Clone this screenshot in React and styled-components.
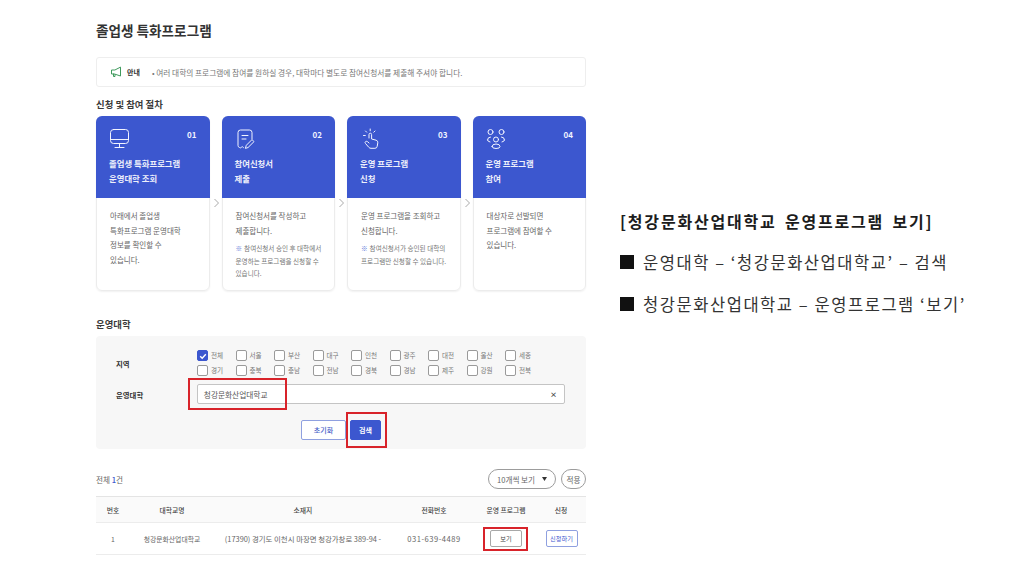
import React from "react";
import styled, { createGlobalStyle } from "styled-components";

const GlobalStyle = createGlobalStyle`
  html, body {
    margin: 0;
    padding: 0;
    background: #ffffff;
  }
  body {
    font-family: "Noto Sans CJK KR", "Noto Sans", sans-serif;
  }
`;

const Page = styled.div`
  width: 1024px;
  height: 576px;
  display: flex;
  overflow: hidden;
  background: #fff;
`;

const LeftColumn = styled.div`
  width: 490px;
  margin-left: 96px;
  padding-top: 21px;
  display: flex;
  flex-direction: column;
`;

const RightColumn = styled.div`
  margin-left: 34px;
  padding-top: 210px;
  display: flex;
  flex-direction: column;
  color: #222;
`;

const GuideTitle = styled.div`
  font-size: 16px;
  line-height: 22px;
  font-weight: 700;
  color: #1c1c1c;
  white-space: nowrap;
  word-spacing: 3px;
  letter-spacing: 1.8px;
`;

const GuideLine = styled.div`
  margin-top: ${(p) => p.$gap}px;
  font-size: 16.5px;
  line-height: 22px;
  color: #333;
  white-space: pre;
  letter-spacing: 1.55px;
  display: flex;
  align-items: center;
`;

const Square = styled.span`
  width: 14px;
  height: 14px;
  background: #111;
  margin-right: 9px;
`;

const PageTitle = styled.h1`
  margin: 0;
  font-size: 13.6px;
  line-height: 18px;
  font-weight: 700;
  color: #333;
`;

const Notice = styled.div`
  margin-top: 18px;
  height: 30px;
  box-sizing: border-box;
  border: 1px solid #eeeeee;
  border-radius: 3px;
  display: flex;
  align-items: center;
  padding-left: 13px;
  font-size: 7.7px;
  color: #777;
  white-space: nowrap;
`;

const NoticeLabel = styled.span`
  font-size: 7px;
  font-weight: 700;
  color: #333;
  margin-left: 5px;
  margin-right: 12px;
`;

const SectionTitle = styled.h2`
  margin: ${(p) => p.$top}px 0 0;
  font-size: 9.4px;
  line-height: 14px;
  font-weight: 700;
  color: #3a3a3a;
`;

const Steps = styled.div`
  margin-top: 5px;
  display: grid;
  grid-template-columns: repeat(4, 113.5px);
  column-gap: 12px;
`;

const Card = styled.div`
  position: relative;
  height: 175px;
  box-sizing: border-box;
  border: 1px solid #ececec;
  border-radius: 6px;
  box-shadow: 0 1px 2px rgba(0, 0, 0, 0.06);
  display: flex;
  flex-direction: column;
`;

const CardHead = styled.div`
  height: 82px;
  margin: -1px -1px 0;
  background: #3c57cf;
  border-radius: 6px 6px 0 0;
  box-sizing: border-box;
  padding: 12px 13px 0 13px;
  color: #fff;
  display: flex;
  flex-direction: column;
`;

const CardTop = styled.div`
  display: flex;
  justify-content: space-between;
  align-items: flex-start;
  height: 24px;
`;

const StepNo = styled.span`
  font-size: 8px;
  line-height: 14px;
  font-weight: 700;
  color: #f1f3ff;
`;

const CardTitle = styled.div`
  margin-top: 4px;
  font-size: 8.4px;
  line-height: 15px;
  font-weight: 700;
  color: #eef0fb;
  white-space: pre-line;
`;

const CardBody = styled.div`
  padding: 11px 6px 0 13px;
  font-size: 7.5px;
  line-height: 14.5px;
  color: #666;
  white-space: pre-line;
`;

const CardNote = styled.div`
  margin-top: 4px;
  font-size: 6.6px;
  line-height: 12.5px;
  color: #777;
  white-space: pre-line;

  b {
    color: #5b77d8;
    font-weight: 400;
    margin-right: 2px;
  }
`;

const Chevron = styled.svg`
  position: absolute;
  top: 81px;
  right: -11px;
  width: 7px;
  height: 10px;
`;

const FilterPanel = styled.div`
  position: relative;
  margin-top: 5px;
  height: 113px;
  box-sizing: border-box;
  background: #f7f7f7;
  border-radius: 4px;
  padding: 12px 21px 0 20px;
  display: flex;
  flex-direction: column;
`;

const FilterRow = styled.div`
  display: flex;
  align-items: center;
  height: ${(p) => p.$height}px;
  margin-top: ${(p) => p.$top || 0}px;
`;

const FilterLabel = styled.div`
  width: 81px;
  font-size: 7.4px;
  font-weight: 700;
  color: #333;
`;

const RegionGrid = styled.div`
  display: grid;
  grid-template-columns: repeat(9, 38.5px);
  row-gap: 4px;
`;

const Region = styled.div`
  display: flex;
  align-items: center;
  gap: 3px;
  font-size: 6.6px;
  line-height: 11px;
  color: #777;
`;

const Box = styled.span`
  width: 11px;
  height: 11px;
  box-sizing: border-box;
  border-radius: 2px;
  background: ${(p) => (p.$on ? "#3c57cf" : "#fff")};
  border: 1px solid ${(p) => (p.$on ? "#3c57cf" : "#9a9a9a")};
  display: flex;
  align-items: center;
  justify-content: center;
`;

const SearchInput = styled.div`
  width: 369px;
  height: 20px;
  box-sizing: border-box;
  background: #fff;
  border: 1px solid #c4c4c4;
  border-radius: 2px;
  padding: 0 7px 0 6px;
  display: flex;
  align-items: center;
  justify-content: space-between;
  font-size: 7.7px;
  color: #555;
`;

const ClearMark = styled.span`
  font-size: 7px;
  font-weight: 700;
  color: #444;
`;

const ButtonRow = styled.div`
  margin-top: 16px;
  display: flex;
  justify-content: center;
  gap: 4px;
  padding-left: 1px;
`;

const ActionButton = styled.button`
  height: 20px;
  width: ${(p) => p.$width}px;
  padding: 0;
  box-sizing: border-box;
  border-radius: 2px;
  border: 1px solid ${(p) => (p.$primary ? "#3c57cf" : "#8fa0e0")};
  background: ${(p) => (p.$primary ? "#3c57cf" : "#fff")};
  color: ${(p) => (p.$primary ? "#fff" : "#4a63c8")};
  font-family: inherit;
  font-size: 7px;
  font-weight: ${(p) => (p.$primary ? 700 : 500)};
`;

const Highlight = styled.div`
  position: absolute;
  left: ${(p) => p.$x}px;
  top: ${(p) => p.$y}px;
  width: ${(p) => p.$w}px;
  height: ${(p) => p.$h}px;
  box-sizing: border-box;
  border: 2px solid #d8232a;
  pointer-events: none;
`;

const ListBar = styled.div`
  margin-top: 20px;
  height: 20px;
  display: flex;
  align-items: center;
  justify-content: space-between;
`;

const Count = styled.div`
  font-size: 7.6px;
  color: #666;

  b {
    color: #3c57cf;
    font-weight: 500;
  }
`;

const ListTools = styled.div`
  display: flex;
  gap: 5px;
`;

const Pill = styled.div`
  height: 20px;
  width: ${(p) => p.$width}px;
  box-sizing: border-box;
  border: 1px solid #9c9c9c;
  border-radius: 10px;
  display: flex;
  align-items: center;
  justify-content: ${(p) => (p.$caret ? "space-between" : "center")};
  padding: ${(p) => (p.$caret ? "0 8px 0 8px" : "0")};
  font-size: 7.6px;
  color: #666;
  white-space: nowrap;
`;

const Table = styled.div`
  margin-top: 7px;
  border-top: 1px solid #e4e4e4;
`;

const TableRow = styled.div`
  display: grid;
  grid-template-columns: 34px 84px 178px 84px 60px 50px;
  height: ${(p) => p.$height}px;
  background: ${(p) => (p.$head ? "#fafafa" : "#fff")};
  border-bottom: 1px solid #ececec;
  align-items: center;
  text-align: center;
  font-size: 6.8px;
  color: ${(p) => (p.$head ? "#444" : "#666")};
  font-weight: ${(p) => (p.$head ? 500 : 400)};
  white-space: nowrap;
`;

const AddressText = styled.span`
  font-size: 7.4px;
`;

const PhoneText = styled.span`
  font-size: 7.6px;
  letter-spacing: 0.5px;
`;

const SmallButton = styled.button`
  height: 17px;
  width: ${(p) => p.$width}px;
  padding: 0;
  margin-left: ${(p) => (p.$blue ? 1 : 0)}px;
  border-radius: 2px;
  border: 1px solid ${(p) => (p.$blue ? "#8fa0e0" : "#a8a8a8")};
  background: #fff;
  color: ${(p) => (p.$blue ? "#3c57cf" : "#444")};
  font-family: inherit;
  font-size: 6.2px;
  white-space: nowrap;
`;

const Cell = styled.div`
  position: relative;
  display: flex;
  justify-content: center;
  align-items: center;
`;

const IconSvg = styled.svg`
  width: ${(p) => p.$size || 22}px;
  height: ${(p) => p.$size || 22}px;
  fill: none;
  stroke: ${(p) => p.$color || "#f2f4ff"};
  stroke-width: ${(p) => p.$stroke || 1};
  stroke-linecap: round;
  stroke-linejoin: round;
`;

const MonitorIcon = () => (
  <IconSvg viewBox="0 0 22 22">
    <rect x="1.5" y="1.5" width="18" height="14" rx="3" />
    <path d="M1.5 11.5h18M10.5 15.5v4M6 19.5h9" />
  </IconSvg>
);

const FormIcon = () => (
  <IconSvg viewBox="0 0 22 22">
    <path d="M8.5 19.5q-1.2-1.6-2.2-.2-.8 1-1.8.2Q3 19 3 17.5V4.5Q3 2 5.5 2h9Q17 2 17 4.5V11" />
    <path d="M7 7.5h6M7 11h4" />
    <path d="M10.5 20l.8-2.7 5.7-5.7 2 2-5.7 5.7z" />
  </IconSvg>
);

const TapIcon = () => (
  <IconSvg viewBox="0 0 22 22">
    <path d="M9 10V6.5a1.3 1.3 0 0 1 2.6 0V11l4.5 1.2q2 .6 1.7 2.6l-.6 3.5q-.3 2-2.3 2H11q-1.3 0-2.2-1L5.5 15.5q-1-1.3.2-2 1-.6 2 .3L9 15" />
    <path d="M10.2 1v1.8M5.5 3l1.2 1.2M15 3l-1.2 1.2M3.5 7.5h1.8" />
  </IconSvg>
);

const PeopleIcon = () => (
  <IconSvg viewBox="0 0 22 22">
    <circle cx="4.5" cy="4" r="2.5" />
    <circle cx="15.5" cy="4" r="2.5" />
    <circle cx="10" cy="11.5" r="2.5" />
    <path d="M1.5 12q0-3 3-3M18.5 12q0-3-3-3M1.5 12q.3 1.8 2.5 2M18.5 12q-.3 1.8-2.5 2" />
    <path d="M6 18.5q0-2.5 4-2.5t4 2.5q0 2-4 2t-4-2z" />
  </IconSvg>
);

const MegaphoneIcon = () => (
  <IconSvg viewBox="0 0 12 12" $size={12} $color="#3f9a5d" $stroke={1}>
    <path d="M10.5 1.5v8.5L4.5 8H1.5V4H4.5z" />
    <path d="M3.5 8v2.5h1.5V8.5" />
  </IconSvg>
);

const steps = [
  {
    no: "01",
    icon: <MonitorIcon />,
    title: "졸업생 특화프로그램\n운영대학 조회",
    body: "아래에서 졸업생\n특화프로그램 운영대학\n정보를 확인할 수\n있습니다.",
  },
  {
    no: "02",
    icon: <FormIcon />,
    title: "참여신청서\n제출",
    body: "참여신청서를 작성하고\n제출합니다.",
    note: "참여신청서 승인 후 대학에서\n운영하는 프로그램을 신청할 수\n있습니다.",
  },
  {
    no: "03",
    icon: <TapIcon />,
    title: "운영 프로그램\n신청",
    body: "운영 프로그램을 조회하고\n신청합니다.",
    note: "참여신청서가 승인된 대학의\n프로그램만 신청할 수 있습니다.",
  },
  {
    no: "04",
    icon: <PeopleIcon />,
    title: "운영 프로그램\n참여",
    body: "대상자로 선발되면\n프로그램에 참여할 수\n있습니다.",
  },
];

const regions = [
  "전체", "서울", "부산", "대구", "인천", "광주", "대전", "울산", "세종",
  "경기", "충북", "충남", "전남", "경북", "경남", "제주", "강원", "전북",
];

export default function App() {
  return (
    <Page>
      <GlobalStyle />
      <LeftColumn>
        <PageTitle>졸업생 특화프로그램</PageTitle>
        <Notice>
          <MegaphoneIcon />
          <NoticeLabel>안내</NoticeLabel>
          • 여러 대학의 프로그램에 참여를 원하실 경우, 대학마다 별도로 참여신청서를 제출해 주셔야 합니다.
        </Notice>
        <SectionTitle $top={10}>신청 및 참여 절차</SectionTitle>
        <Steps>
          {steps.map((step, i) => (
            <Card key={step.no}>
              <CardHead>
                <CardTop>
                  {step.icon}
                  <StepNo>{step.no}</StepNo>
                </CardTop>
                <CardTitle>{step.title}</CardTitle>
              </CardHead>
              <CardBody>
                {step.body}
                {step.note && (
                  <CardNote>
                    <b>※</b>{step.note}
                  </CardNote>
                )}
              </CardBody>
              {i < 3 && (
                <Chevron viewBox="0 0 7 10" fill="none" stroke="#aaa">
                  <path d="M1.5 1l4 4-4 4" />
                </Chevron>
              )}
            </Card>
          ))}
        </Steps>
        <SectionTitle $top={26}>운영대학</SectionTitle>
        <FilterPanel>
          <FilterRow $height={30}>
            <FilterLabel>지역</FilterLabel>
            <RegionGrid>
              {regions.map((name, i) => (
                <Region key={name}>
                  <Box $on={i === 0}>
                    {i === 0 && (
                      <svg width="8" height="8" viewBox="0 0 8 8" fill="none" stroke="#fff" strokeWidth="1.4">
                        <path d="M1.2 4.2l2 2 3.6-4" />
                      </svg>
                    )}
                  </Box>
                  {name}
                </Region>
              ))}
            </RegionGrid>
          </FilterRow>
          <FilterRow $height={20} $top={6}>
            <FilterLabel>운영대학</FilterLabel>
            <SearchInput>
              청강문화산업대학교
              <ClearMark>×</ClearMark>
            </SearchInput>
          </FilterRow>
          <ButtonRow>
            <ActionButton $width={45}>초기화</ActionButton>
            <ActionButton $width={31} $primary>검색</ActionButton>
          </ButtonRow>
          <Highlight $x={92} $y={42} $w={99} $h={32} />
          <Highlight $x={250} $y={76} $w={41} $h={36} />
        </FilterPanel>
        <ListBar>
          <Count>전체 <b>1</b>건</Count>
          <ListTools>
            <Pill $width={68} $caret>
              10개씩 보기
              <svg width="5" height="4" viewBox="0 0 5 4" fill="#333">
                <path d="M0 0h5L2.5 4z" />
              </svg>
            </Pill>
            <Pill $width={25}>적용</Pill>
          </ListTools>
        </ListBar>
        <Table>
          <TableRow $head $height={25}>
            <span>번호</span>
            <span>대학교명</span>
            <span>소재지</span>
            <span>전화번호</span>
            <span>운영 프로그램</span>
            <span>신청</span>
          </TableRow>
          <TableRow $height={31}>
            <span>1</span>
            <span>청강문화산업대학교</span>
            <AddressText>(17390) 경기도 이천시 마장면 청강가창로 389-94 -</AddressText>
            <PhoneText>031-639-4489</PhoneText>
            <Cell>
              <SmallButton $width={32}>보기</SmallButton>
              <Highlight $x={7} $y={-3} $w={45} $h={24} />
            </Cell>
            <Cell>
              <SmallButton $width={32} $blue>신청하기</SmallButton>
            </Cell>
          </TableRow>
        </Table>
      </LeftColumn>
      <RightColumn>
        <GuideTitle>[청강문화산업대학교 운영프로그램 보기]</GuideTitle>
        <GuideLine $gap={19}>
          <Square />운영대학 – ‘청강문화산업대학교’ – 검색
        </GuideLine>
        <GuideLine $gap={20}>
          <Square />청강문화산업대학교 – 운영프로그램 ‘보기’
        </GuideLine>
      </RightColumn>
    </Page>
  );
}
